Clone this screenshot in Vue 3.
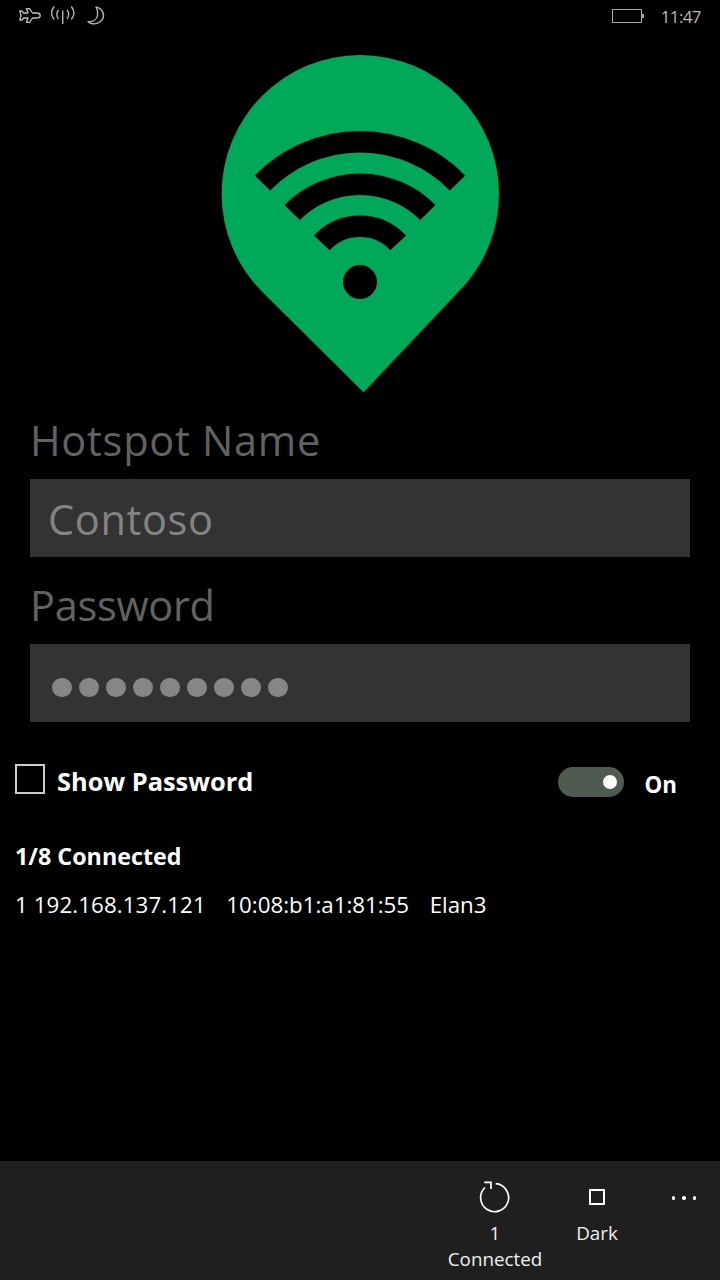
<script setup>
const dots = 9
const clients = [{ id: 1, ip: '192.168.137.121', mac: '10:08:b1:a1:81:55', name: 'Elan3' }]
</script>

<template>
  <div class="page">
    <div class="status">
      <div class="status-left">
        <svg class="ic-plane" width="22" height="15" viewBox="0 0 22 15" fill="none" stroke="#c0c0c0" stroke-width="1.300" stroke-linejoin="round">
          <path d="M21.200 7.500C21.200 6 20 5 18 5H13.500L10.500 .7H7.500L9 5H4.500L3 3H.8L2 7.500L.8 12H3L4.500 10H9L7.500 14.300H10.500L13.500 10H18C20 10 21.200 9 21.200 7.500Z" />
        </svg>
        <svg class="ic-signal" width="24" height="18" viewBox="0 0 24 18" fill="none" stroke="#b4b4b4" stroke-width="1.400">
          <path d="M11.700 4.500V18" />
          <path d="M7.500 4C5.300 6.500 5.300 10.500 7.500 13M16 4C18.200 6.500 18.200 10.500 16 13" />
          <path d="M3.200 .5C-.1 4.500 -.1 9.500 3.200 13.500M20.300 .5C23.600 4.500 23.600 9.500 20.300 13.500" />
        </svg>
        <svg class="ic-moon" width="18" height="20" viewBox="0 0 18 20" fill="none" stroke="#b4b4b4" stroke-width="1.400" stroke-linejoin="round">
          <path d="M9 1C13.500 2 17 5.500 16.500 10C16 15 10.500 18.500 5.500 17.700C4 17.500 2.200 16.800 1 15.700C6 16 9.800 13.500 10.500 9.500C11 6.500 10.500 3.500 9 1Z" />
        </svg>
      </div>
      <div class="status-right">
        <div class="battery"></div>
        <span class="clock">11:47</span>
      </div>
    </div>

    <div class="logo-wrap">
      <svg width="320" height="360" viewBox="0 0 320 360">
        <path fill="#00a859" d="M62.200 251.800A138.700 138.700 0 1 1 258.400 251.800L163.500 352.300Z" />
        <g fill="none" stroke="#000" stroke-width="21.500">
          <path d="M62.500 143A136 136 0 0 1 257.500 143" />
          <path d="M92.200 172.500A95.400 95.400 0 0 1 227.800 172.500" />
          <path d="M121.800 202.800A52.300 52.300 0 0 1 198.200 202.800" />
        </g>
        <circle cx="160" cy="242" r="17" fill="#000" />
      </svg>
    </div>

    <div class="form">
      <label class="field-label">Hotspot Name</label>
      <div class="field">Contoso</div>
      <label class="field-label second">Password</label>
      <div class="field dots">
        <span v-for="n in dots" :key="n" class="dot"></span>
      </div>
    </div>

    <div class="options">
      <div class="check-row">
        <span class="checkbox"></span>
        <span class="check-label">Show Password</span>
      </div>
      <div class="toggle-row">
        <span class="toggle"><span class="knob"></span></span>
        <span class="toggle-label">On</span>
      </div>
    </div>

    <div class="clients">
      <div class="clients-title">1/8 Connected</div>
      <div v-for="c in clients" :key="c.id" class="client">
        <span class="client-ip">{{ c.id }} {{ c.ip }}</span>
        <span>{{ c.mac }}</span>
        <span>{{ c.name }}</span>
      </div>
    </div>

    <div class="appbar">
      <div class="bar-btn btn-refresh">
        <svg width="34" height="36" viewBox="0 0 34 36" fill="none" stroke="#fff" stroke-width="1.700">
          <path d="M17.700 4.700A14 14 0 1 1 7 8.500" />
          <path d="M6.300 3.300H13V10" />
        </svg>
        <span class="bar-label">1<br />Connected</span>
      </div>
      <div class="bar-btn btn-dark">
        <svg width="34" height="36" viewBox="0 0 34 36" fill="none" stroke="#fff" stroke-width="2">
          <rect x="10" y="11" width="14" height="14" />
        </svg>
        <span class="bar-label">Dark</span>
      </div>
      <div class="more">
        <span></span><span></span><span></span>
      </div>
    </div>
  </div>
</template>

<style scoped>
.page {
  width: 720px;
  height: 1280px;
  background: #000;
  color: #fff;
  font-family: "Open Sans", "Noto Sans", sans-serif;
  display: flex;
  flex-direction: column;
  overflow: hidden;
}

.status {
  height: 30px;
  display: flex;
  justify-content: space-between;
  padding: 0 19px;
}

.status-left {
  display: flex;
  align-items: flex-start;
  padding-top: 6px;
}

.ic-plane {
  margin-top: 2px;
}

.ic-signal {
  margin-left: 10px;
}

.ic-moon {
  margin-left: 12px;
}

.status-right {
  display: flex;
  align-items: center;
  padding-top: 2px;
}

.battery {
  width: 30px;
  height: 14px;
  border: 1px solid #aaa;
  box-sizing: border-box;
  position: relative;
  margin-right: 19px;
}

.battery::after {
  content: "";
  position: absolute;
  right: -3px;
  top: 4px;
  width: 2px;
  height: 4px;
  background: #aaa;
}

.clock {
  font-size: 17px;
  letter-spacing: -0.600px;
  color: #b8b8b8;
}

.logo-wrap {
  height: 370px;
  padding-top: 10px;
  box-sizing: border-box;
  display: flex;
  justify-content: center;
}

.form {
  display: flex;
  flex-direction: column;
  padding: 0 30px;
}

.field-label {
  font-size: 41.500px;
  letter-spacing: 0.750px;
  line-height: 81px;
  color: #626262;
  height: 79px;
}

.field-label.second {
  height: 87px;
  line-height: 96px;
  letter-spacing: -0.300px;
}

.field {
  height: 78px;
  background: #333;
  color: #848484;
  font-size: 41.500px;
  letter-spacing: 0.650px;
  line-height: 80px;
  padding-left: 18px;
}

.dots {
  display: flex;
  align-items: center;
  gap: 7.500px;
  padding-left: 22px;
  padding-top: 9px;
  box-sizing: border-box;
}

.dot {
  width: 19.500px;
  height: 19.500px;
  border-radius: 50%;
  background: #868686;
}

.options {
  display: flex;
  justify-content: space-between;
  align-items: center;
  padding: 41px 43px 0 15px;
}

.check-row {
  display: flex;
  align-items: center;
  gap: 12px;
}

.checkbox {
  width: 30px;
  height: 30px;
  box-sizing: border-box;
  border: 2px solid #ccc;
  margin-top: -5px;
}

.check-label {
  font-size: 25.400px;
  font-weight: 700;
  line-height: 34px;
  margin-top: -2px;
}

.toggle-row {
  display: flex;
  align-items: center;
  gap: 21px;
}

.toggle {
  width: 66px;
  height: 30px;
  margin-top: 1px;
  border-radius: 15px;
  background: #4f5b50;
  display: flex;
  align-items: center;
  justify-content: flex-end;
  padding-right: 7px;
  box-sizing: border-box;
}

.knob {
  width: 14px;
  height: 14px;
  border-radius: 50%;
  background: #fff;
}

.toggle-label {
  font-size: 22.300px;
  font-weight: 700;
  margin-top: 6px;
}

.clients {
  padding: 41px 15px 0;
  flex: 1;
}

.clients-title {
  font-size: 23.300px;
  font-weight: 700;
  line-height: 30px;
}

.client {
  display: flex;
  gap: 20.500px;
  font-size: 22.300px;
  line-height: 30px;
  margin-top: 19px;
}

.client-ip {
  letter-spacing: 0.100px;
}

.appbar {
  height: 119px;
  background: #1f1f1f;
  display: flex;
  justify-content: flex-end;
  position: relative;
  padding-right: 74px;
  box-sizing: border-box;
}

.bar-btn {
  display: flex;
  flex-direction: column;
  align-items: center;
  padding-top: 18px;
}

.btn-refresh {
  width: 102px;
}

.btn-dark {
  width: 102px;
  margin-right: -2px;
}

.bar-label {
  font-size: 18.800px;
  line-height: 26px;
  text-align: center;
  margin-top: 5px;
  color: #f0f0f0;
}

.more {
  position: absolute;
  right: 24px;
  top: 35px;
  display: flex;
  gap: 7px;
}

.more span {
  width: 3.500px;
  height: 3.500px;
  border-radius: 50%;
  background: #fff;
}
</style>

<style>
html,
body {
  margin: 0;
  background: #000;
}
</style>
